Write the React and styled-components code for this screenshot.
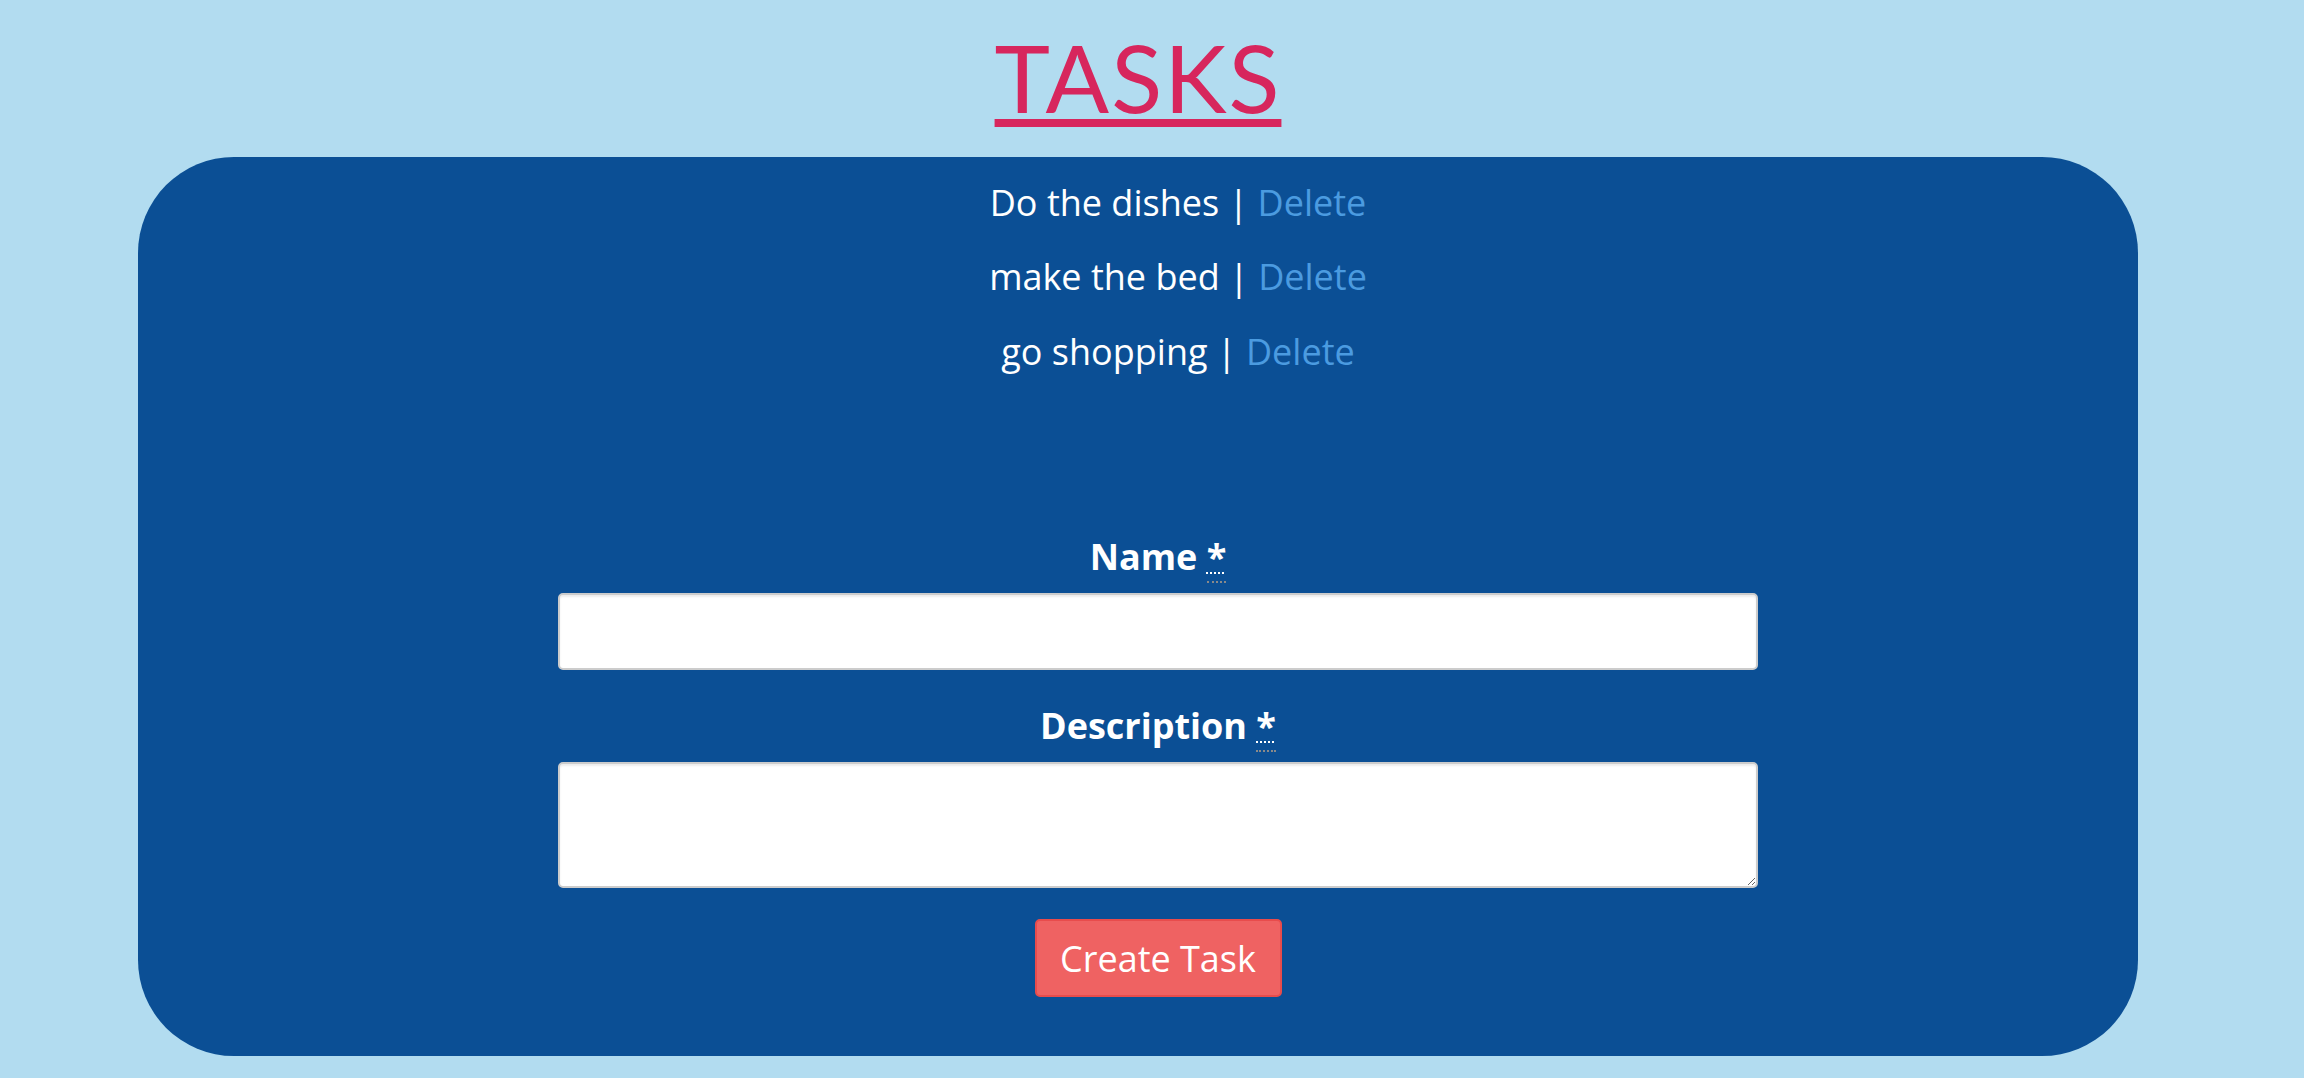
import React from 'react';
import styled, { createGlobalStyle } from 'styled-components';

const GlobalStyle = createGlobalStyle`
    html, body {
        margin: 0;
        padding: 0;
        background: #b2dcf0;
        font-family: "Open Sans", "Liberation Sans", sans-serif;
    }
`

export default class App extends React.Component {
    constructor(props) {
        super(props)
        this.state = {
            tasks: ["Do the dishes", "make the bed", "go shopping"]
        }
    }
    render() {
        return (
            <Page>
                <GlobalStyle />
                <Title>TASKS</Title>
                <Panel>
                    <List>
                        {this.state.tasks.map(task => (
                            <Item key={task}>
                                {task} | <DeleteLink href="#">Delete</DeleteLink>
                            </Item>
                        ))}
                    </List>
                    <Form onSubmit={e => e.preventDefault()}>
                        <Label>Name <Required title="required">*</Required></Label>
                        <Input type="text" />
                        <Label spaced>Description <Required title="required">*</Required></Label>
                        <TextArea />
                        <Button type="submit">Create Task</Button>
                    </Form>
                </Panel>
            </Page>
        );
    }
}

const Page = styled.div`
    width: 2000px;
    margin-left: 138px;
    padding-top: 21px;
`
const Title = styled.h1`
    margin: 0 0 23px 0;
    text-align: center;
    font-family: Lato, "Open Sans", sans-serif;
    font-weight: 400;
    font-size: 94px;
    letter-spacing: 2px;
    line-height: 1.2;
    color: #d7265d;
    text-decoration: underline;
    text-decoration-thickness: 8px;
    text-underline-offset: 6px;
`
const Panel = styled.div`
    background: #0b4f95;
    border-radius: 96px;
    padding: 9px 0 59px 0;
`
const List = styled.ul`
    list-style: none;
    margin: 0;
    padding: 0 0 0 80px;
    text-align: center;
`
const Item = styled.li`
    color: #ffffff;
    font-size: 36px;
    line-height: 74.5px;
`
const DeleteLink = styled.a`
    color: #4b9be0;
    text-decoration: none;
`
const Form = styled.form`
    display: flex;
    flex-direction: column;
    align-items: center;
    padding: 142px 0 0 40px;
`
const Label = styled.label`
    color: #ffffff;
    font-weight: 700;
    font-size: 36px;
    line-height: 52px;
    margin: ${props => props.spaced ? '30px' : '0'} 0 10px 0;
`
const Required = styled.abbr`
    text-decoration: underline dotted #ffffff;
    text-decoration-thickness: 2px;
    text-underline-offset: 2px;
    border-bottom: 2px dotted #8a8a8a;
    cursor: help;
`
const Input = styled.input`
    box-sizing: border-box;
    width: 1200px;
    height: 77px;
    margin: 0;
    border: 2px solid #cccccc;
    border-radius: 5px;
    background: #ffffff;
    box-shadow: inset 0 2px 2px rgba(0, 0, 0, 0.075);
    font-family: "Open Sans", sans-serif;
    font-size: 32px;
    padding: 12px 24px;
`
const TextArea = styled.textarea`
    box-sizing: border-box;
    width: 1200px;
    height: 126px;
    margin: 0;
    border: 2px solid #cccccc;
    border-radius: 5px;
    background: #ffffff;
    box-shadow: inset 0 2px 2px rgba(0, 0, 0, 0.075);
    font-family: "Open Sans", sans-serif;
    font-size: 32px;
    padding: 12px 24px;
`
const Button = styled.button`
    box-sizing: border-box;
    margin-top: 31px;
    width: 247px;
    height: 78px;
    padding: 0;
    background: #ef6262;
    border: 2px solid #e84c4c;
    border-radius: 5px;
    color: #ffffff;
    font-family: "Open Sans", sans-serif;
    font-size: 36px;
    cursor: pointer;
`
